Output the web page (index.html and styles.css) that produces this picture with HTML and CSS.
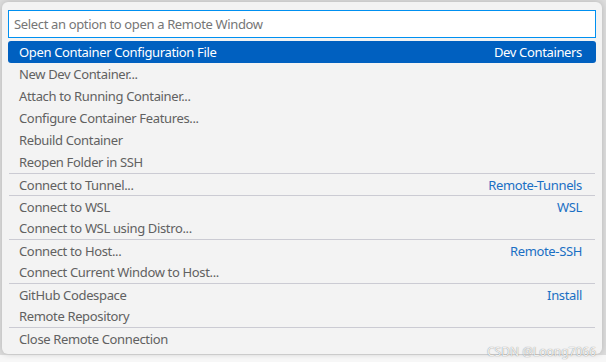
FILE: index.html
```html
<html>
    <head>
        <link rel="stylesheet" href="styles.css">
    </head>
    <body>
        <div id="stage">
            <div id="picker">
                <div id="search">
                    <input type="text" placeholder="Select an option to open a Remote Window">
                </div>
                <div id="list">
                    <div class="row selected"><span class="label">Open Container Configuration File</span><span class="group">Dev Containers</span></div>
                    <div class="row"><span class="label">New Dev Container...</span></div>
                    <div class="row"><span class="label">Attach to Running Container...</span></div>
                    <div class="row"><span class="label">Configure Container Features...</span></div>
                    <div class="row"><span class="label">Rebuild Container</span></div>
                    <div class="row"><span class="label">Reopen Folder in SSH</span></div>
                    <div class="row sep"><span class="label">Connect to Tunnel...</span><span class="group">Remote-Tunnels</span></div>
                    <div class="row sep"><span class="label">Connect to WSL</span><span class="group">WSL</span></div>
                    <div class="row"><span class="label">Connect to WSL using Distro...</span></div>
                    <div class="row sep"><span class="label">Connect to Host...</span><span class="group">Remote-SSH</span></div>
                    <div class="row"><span class="label">Connect Current Window to Host...</span></div>
                    <div class="row sep"><span class="label">GitHub Codespace</span><span class="group">Install</span></div>
                    <div class="row"><span class="label">Remote Repository</span></div>
                    <div class="row sep"><span class="label">Close Remote Connection</span></div>
                </div>
                <div id="watermark">CSDN @Loong7066</div>
            </div>
        </div>
    </body>
</html>
```

FILE: styles.css
```css
html, body {
    margin: 0;
    height: 100%;
}
body {
    font-family: "Segoe UI", "Noto Sans", sans-serif;
    font-size: 13px;
    letter-spacing: -0.35px;
    overflow: hidden;
}
#stage {
    height: 362px;
    padding: 2px 4px 0 2px;
    box-sizing: border-box;
    background: linear-gradient(#dddddd 0, #dddddd 355px, #f7f7f7 355px);
}
#picker {
    position: relative;
    width: 600px;
    height: 352px;
    background-color: #f3f3f3;
    border-radius: 6px;
    box-shadow: 0 0 6px rgba(0,0,0,0.18);
    padding: 8px 6px 0 6px;
    box-sizing: border-box;
}
#search input {
    display: block;
    width: 588px;
    height: 28px;
    margin: 0;
    border: 1px solid #0090f1;
    background: white;
    padding: 0 5px;
    box-sizing: border-box;
    font-family: inherit;
    font-size: 13px;
    letter-spacing: -0.35px;
    outline: none;
}
#search input::placeholder {
    color: #767676;
}
#list {
    margin-top: 3px;
    width: 588px;
}
.row {
    height: 22px;
    display: flex;
    align-items: center;
    justify-content: space-between;
    padding: 0 14px 0 11px;
    box-sizing: border-box;
    color: #616161;
    border-radius: 3px;
}
.row.sep {
    border-top: 1px solid #cbcbd3;
    border-radius: 0;
    margin: 0 1px;
    padding: 0 13px 0 10px;
}
.group {
    color: #1a6fc4;
}
.selected {
    background-color: #0060c0;
    color: white;
}
.selected .group {
    color: white;
}
#watermark {
    position: absolute;
    right: 6px;
    bottom: -6px;
    font-size: 12px;
    letter-spacing: 0;
    color: rgba(255,255,255,0.9);
    text-shadow: 0 0 1px rgba(0,0,0,0.55);
}
```
